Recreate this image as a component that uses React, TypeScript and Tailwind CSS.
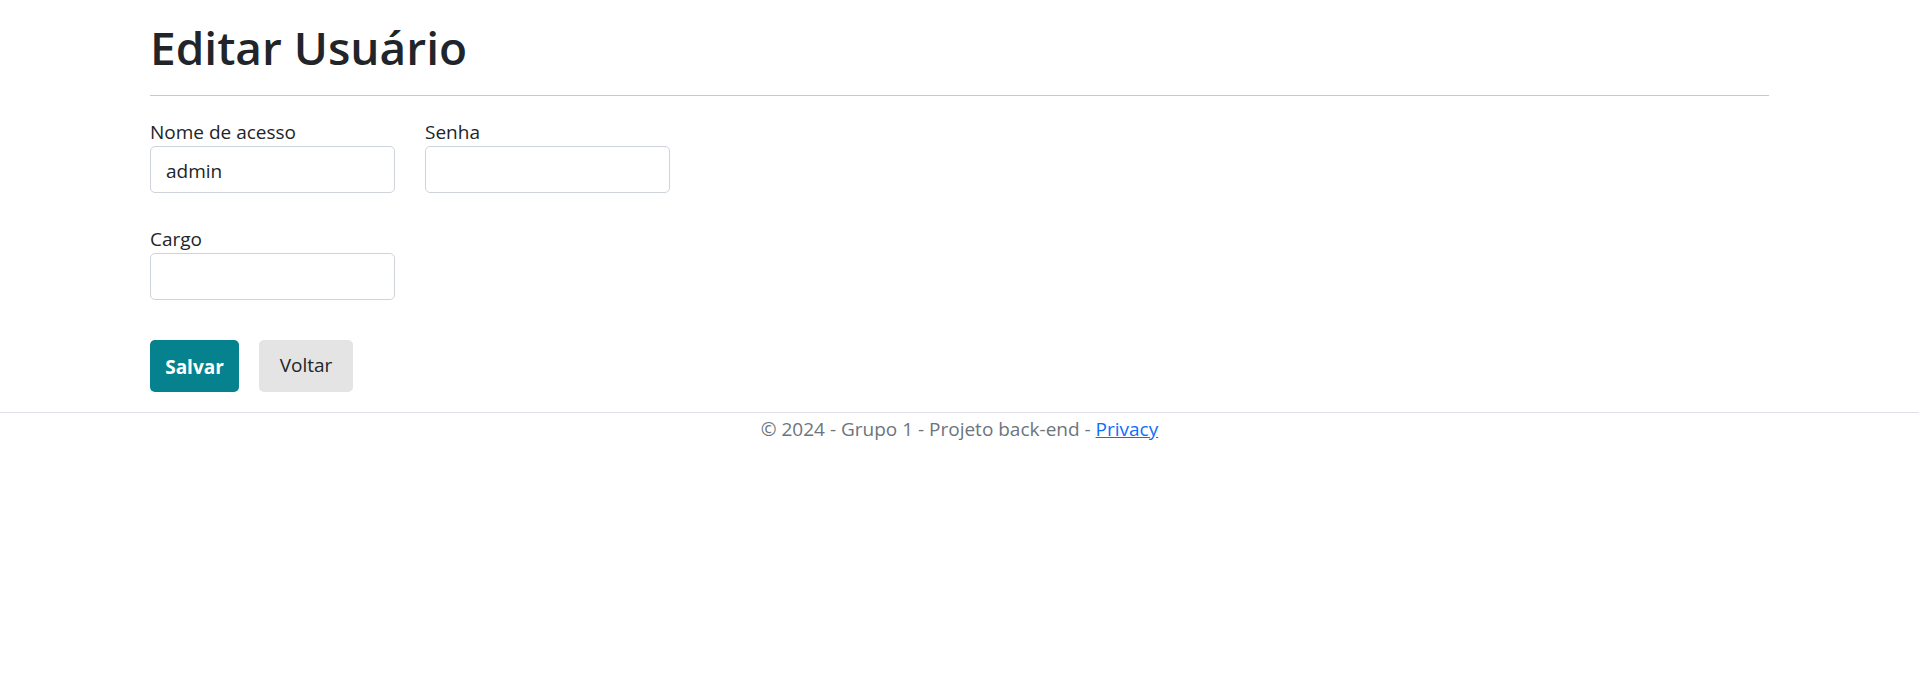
import type { InputHTMLAttributes } from 'react';

type FieldProps = InputHTMLAttributes<HTMLInputElement> & { id: string; label: string };

function Field({ id, label, ...rest }: FieldProps) {
  return (
    <div className="flex w-[245px] flex-col">
      <label htmlFor={id} className="pt-0.5 leading-7">{label}</label>
      <input
        id={id}
        className="h-[47px] rounded-[5px] border border-[#ced4da] bg-white px-[15px] pt-[3px] focus:outline-2 focus:outline-[#86b7fe]"
        {...rest}
      />
    </div>
  );
}

export default function App() {
  return (
    <div className="bg-white font-['Open_Sans','Noto_Sans',sans-serif] text-[19px] text-[#212529]">
      <main className="px-[150px] pb-5">
        <h1 className="pt-[17px] text-[46px] leading-[60px] font-semibold">Editar Usuário</h1>
        <hr className="mt-[18px] border-t border-[#c7c8c9]" />
        <form className="pt-5" onSubmit={(e) => e.preventDefault()}>
          <div className="flex gap-[30px]">
            <Field id="login" label="Nome de acesso" defaultValue="admin" />
            <Field id="senha" label="Senha" type="password" />
          </div>
          <div className="mt-[30px]">
            <Field id="cargo" label="Cargo" />
          </div>
          <div className="mt-10 flex gap-5">
            <button type="submit" className="h-[52px] w-[89px] rounded-[5px] bg-[#05828e] pt-0.5 font-bold text-white">Salvar</button>
            <a href="#voltar" className="h-[52px] w-[94px] rounded-[5px] bg-[#e4e4e4] text-center leading-[50px]">Voltar</a>
          </div>
        </form>
      </main>
      <footer className="border-t border-[#dee2e6] text-center leading-[32px] text-[#6c757d]">
        © 2024 - Grupo 1 - Projeto back-end - <a href="#privacy" className="text-[#0d6efd] underline">Privacy</a>
      </footer>
    </div>
  );
}
